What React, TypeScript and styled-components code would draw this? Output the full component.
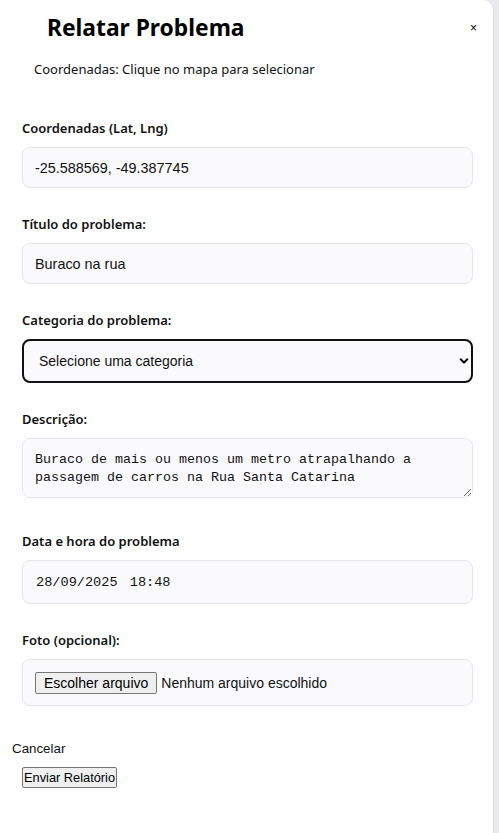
import React, {useState} from 'react';
import styled, {createGlobalStyle} from 'styled-components';

const GlobalStyle = createGlobalStyle`
    html, body {
        margin: 0;
        padding: 0;
        background: #e9eaee;
    }
    * {
        box-sizing: border-box;
    }
`;

const Panel = styled.div`
    width: 494px;
    min-height: 833px;
    background: #ffffff;
    border-right: 1px solid #dcdde3;
    border-top-right-radius: 10px;
    font-family: "Noto Sans", "Open Sans", sans-serif;
    color: #111;
    display: flex;
    flex-direction: column;
`;

const Header = styled.div`
    display: flex;
    align-items: center;
    justify-content: space-between;
    padding: 11px 12px 0 47px;
    height: 44px;
`;

const Title = styled.h2`
    margin: 0;
    font-size: 22.8px;
    font-weight: 700;
    color: #000;
`;

const CloseButton = styled.button`
    background: none;
    border: none;
    padding: 0 4px;
    font-size: 12px;
    line-height: 1;
    color: #000;
    cursor: pointer;
    font-family: "Liberation Sans", Arial, sans-serif;
`;

const CoordsHint = styled.p`
    margin: 15px 0 0 34px;
    font-size: 13px;
    line-height: 20px;
    color: #111;
`;

const Form = styled.form`
    display: flex;
    flex-direction: column;
    padding: 39px 20px 0 22px;
`;

const Field = styled.div`
    display: flex;
    flex-direction: column;
    margin-bottom: 26px;
`;

const Label = styled.label`
    font-size: 13px;
    font-weight: 650;
    line-height: 20px;
    margin-bottom: 9px;
    color: #111;
`;

const boxStyles = `
    width: 100%;
    background: #fafafc;
    border: 1px solid #e4e6ee;
    border-radius: 8px;
    color: #111;
    outline: none;
`;

const TextInput = styled.input<{$mono?: boolean}>`
    ${boxStyles}
    height: ${(p) => (p.$mono ? '44px' : '41px')};
    padding: 0 ${(p) => (p.$mono ? '13px' : '12px')};
    font-family: ${(p) => (p.$mono ? '"Liberation Mono", monospace' : '"Liberation Sans", Arial, sans-serif')};
    font-size: ${(p) => (p.$mono ? '13.6px' : '14.4px')};
    word-spacing: ${(p) => (p.$mono ? '4px' : '0')};
`;

const SelectWrap = styled.div`
    position: relative;
`;

const Select = styled.select`
    ${boxStyles}
    appearance: none;
    height: 44px;
    border: 2px solid #111;
    padding: 0 15px;
    font-family: "Liberation Sans", Arial, sans-serif;
    font-size: 14px;
`;

const Chevron = styled.svg`
    position: absolute;
    right: 4px;
    top: 18px;
    width: 10px;
    height: 8px;
    pointer-events: none;
`;

const TextArea = styled.textarea`
    ${boxStyles}
    display: block;
    height: 60px;
    padding: 12px 12px;
    font-family: "Liberation Mono", monospace;
    font-size: 13.33px;
    line-height: 18px;
    resize: vertical;
    margin-bottom: 7px;
`;

const FileBox = styled.div`
    ${boxStyles}
    height: 47px;
    display: flex;
    align-items: center;
    padding: 0 12px;
    gap: 4px;
    font-family: "Liberation Sans", Arial, sans-serif;
    font-size: 14px;
`;

const NativeButton = styled.button`
    font-family: "Liberation Sans", Arial, sans-serif;
    font-size: 14px;
    color: #000;
    background: #efefef;
    border: 1px solid #767676;
    border-radius: 2px;
    padding: 1px 8px;
    height: 22px;
    line-height: 18px;
    cursor: pointer;
`;

const Footer = styled.div`
    display: flex;
    flex-direction: column;
    align-items: flex-start;
    padding: 9px 0 0 12px;
    gap: 10px;
`;

const PlainButton = styled.button`
    background: none;
    border: none;
    padding: 0;
    font-family: "Liberation Sans", Arial, sans-serif;
    font-size: 13.33px;
    color: #111;
    line-height: 16px;
    cursor: pointer;
`;

const SubmitButton = styled(NativeButton)`
    margin-left: 10px;
    font-size: 12.8px;
    height: 21px;
    line-height: 17px;
    padding: 0 1px;
`;

const App = () => {
    const [coords, setCoords] = useState('-25.588569, -49.387745');
    const [title, setTitle] = useState('Buraco na rua');
    const [category, setCategory] = useState('');
    const [desc, setDesc] = useState('Buraco de mais ou menos um metro atrapalhando a passagem de carros na Rua Santa Catarina');
    const [date, setDate] = useState('28/09/2025 18:48');

    return (
        <>
            <GlobalStyle/>
            <Panel>
                <Header>
                    <Title>{'Relatar Problema'}</Title>
                    <CloseButton>{'×'}</CloseButton>
                </Header>
                <CoordsHint>{'Coordenadas: Clique no mapa para selecionar'}</CoordsHint>
                <Form onSubmit={(e) => e.preventDefault()}>
                    <Field>
                        <Label>{'Coordenadas (Lat, Lng)'}</Label>
                        <TextInput value={coords} onChange={(e) => setCoords(e.target.value)}/>
                    </Field>
                    <Field>
                        <Label>{'Título do problema:'}</Label>
                        <TextInput value={title} onChange={(e) => setTitle(e.target.value)}/>
                    </Field>
                    <Field>
                        <Label>{'Categoria do problema:'}</Label>
                        <SelectWrap>
                            <Select value={category} onChange={(e) => setCategory(e.target.value)}>
                                <option value=''>{'Selecione uma categoria'}</option>
                                <option value='buraco'>{'Buraco'}</option>
                                <option value='iluminacao'>{'Iluminação'}</option>
                                <option value='lixo'>{'Lixo'}</option>
                            </Select>
                            <Chevron viewBox='0 0 10 8'>
                                <path d='M1.2 1.8 L5 5.6 L8.8 1.8' fill='none' stroke='#000' strokeWidth='2'/>
                            </Chevron>
                        </SelectWrap>
                    </Field>
                    <Field>
                        <Label>{'Descrição:'}</Label>
                        <TextArea value={desc} onChange={(e) => setDesc(e.target.value)}/>
                    </Field>
                    <Field>
                        <Label>{'Data e hora do problema'}</Label>
                        <TextInput $mono value={date} onChange={(e) => setDate(e.target.value)}/>
                    </Field>
                    <Field>
                        <Label>{'Foto (opcional):'}</Label>
                        <FileBox>
                            <NativeButton type='button'>{'Escolher arquivo'}</NativeButton>
                            <span>{'Nenhum arquivo escolhido'}</span>
                        </FileBox>
                    </Field>
                </Form>
                <Footer>
                    <PlainButton type='button'>{'Cancelar'}</PlainButton>
                    <SubmitButton type='button'>{'Enviar Relatório'}</SubmitButton>
                </Footer>
            </Panel>
        </>
    );
};

export default App;
